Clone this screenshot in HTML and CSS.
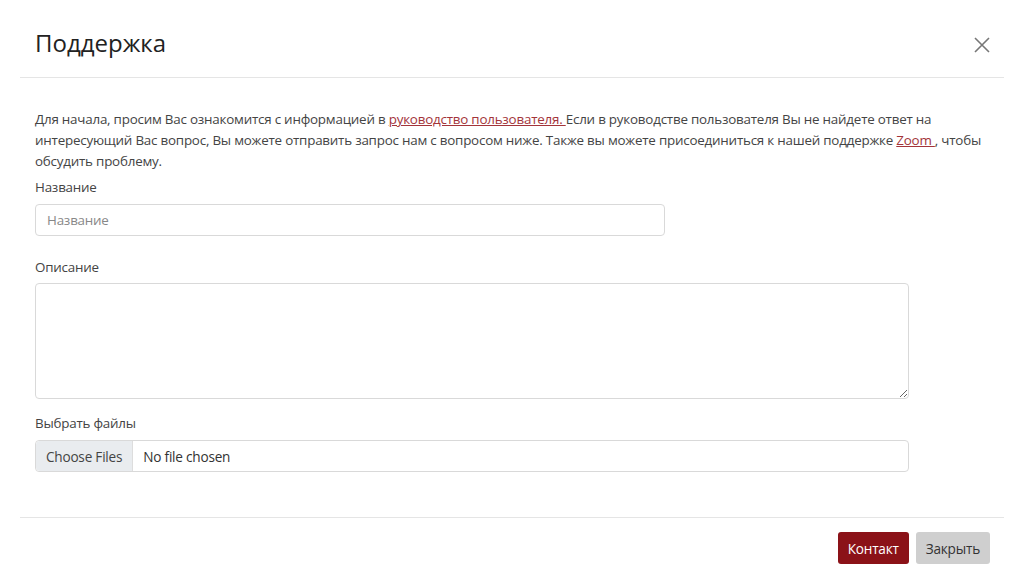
FILE: index.html
```html
<!DOCTYPE html>
<html lang="ru">
<head>
    <meta charset="UTF-8">
    <meta name="viewport" content="width=device-width, initial-scale=1.0">
    <title>Поддержка</title>
    <link rel="stylesheet" href="styles.css">
</head>
<body>
    <div class="modal">
        <!-- Header -->
        <div class="modal-header">
            <h4 class="modal-title">Поддержка</h4>
            <button class="close-btn" type="button" aria-label="Close">
                <svg width="16" height="16" viewBox="0 0 16 16">
                    <path d="M1 1 L15 15 M15 1 L1 15" stroke="#777" stroke-width="1.6" fill="none"/>
                </svg>
            </button>
        </div>

        <!-- Body -->
        <div class="modal-body">
            <p class="intro">Для начала, просим Вас ознакомится с информацией в <a href="#">руководство пользователя. </a>Если в руководстве пользователя Вы не найдете ответ на интересующий Вас вопрос, Вы можете отправить запрос нам с вопросом ниже. Также вы можете присоединиться к нашей поддержке <a href="#">Zoom </a>, чтобы обсудить проблему.</p>

            <div class="form-group first">
                <label for="title">Название</label>
                <input type="text" id="title" class="form-control short" placeholder="Название">
            </div>

            <div class="form-group">
                <label for="desc">Описание</label>
                <textarea id="desc" class="form-control area"></textarea>
            </div>

            <div class="form-group">
                <label for="files">Выбрать файлы</label>
                <input type="file" id="files" class="form-control file" multiple>
            </div>
        </div>

        <!-- Footer -->
        <div class="modal-footer">
            <button class="btn primary" type="button">Контакт</button>
            <button class="btn secondary" type="button">Закрыть</button>
        </div>
    </div>
</body>
</html>
```

FILE: styles.css
```css
body {
    margin: 0;
    padding: 0;
    background: #fff;
    font-family: "Open Sans", "Noto Sans", sans-serif;
    color: #333;
}

.modal {
    width: 984px;
    margin: 0 20px;
}

.modal-header {
    display: flex;
    justify-content: space-between;
    align-items: center;
    padding: 29px 14px 21px 15px;
    border-bottom: 1px solid #e5e5e5;
}

.modal-title {
    margin: 0;
    font-size: 24px;
    font-weight: 400;
    line-height: 27px;
    color: #222;
}

.close-btn {
    border: none;
    background: none;
    padding: 0;
    margin-top: 4px;
    width: 16px;
    height: 16px;
    cursor: pointer;
}

.modal-body {
    padding: 31px 15px 31px;
    letter-spacing: -0.22px;
}

.intro {
    margin: 0 0 5px;
    font-size: 13.4px;
    line-height: 21px;
    color: #444;
}

.intro a {
    color: #a3343a;
    text-decoration: underline;
}

.form-group {
    margin-bottom: 14px;
}

.form-group.first {
    margin-bottom: 21px;
}

.form-group label {
    display: block;
    font-size: 13.4px;
    line-height: 21px;
    color: #444;
    margin-bottom: 6px;
}

.form-control {
    box-sizing: border-box;
    display: block;
    width: 874px;
    height: 32px;
    padding: 6px 11px;
    border: 1px solid #d9d9d9;
    border-radius: 4px;
    background: #fff;
    font-family: inherit;
    font-size: 13.4px;
    letter-spacing: -0.22px;
    color: #444;
}

.form-control::placeholder {
    color: #888;
}

.form-control.short {
    width: 630px;
}

.form-control.area {
    height: 116px;
    margin-top: -1px;
    resize: vertical;
}

.form-control.file {
    padding: 0;
    font-size: 13.6px;
    line-height: 30px;
    color: #333;
}

.form-control.file::file-selector-button {
    height: 30px;
    margin: 0 10px 0 0;
    padding: 0 10px;
    border: none;
    border-right: 1px solid #ddd;
    border-radius: 4px 0 0 4px;
    background: #e9ecef;
    font-family: inherit;
    font-size: 13.6px;
    letter-spacing: -0.22px;
    color: #444;
}

.modal-footer {
    display: flex;
    justify-content: flex-end;
    gap: 7px;
    padding: 14px 14px 18px;
    border-top: 1px solid #e5e5e5;
}

.btn {
    height: 32px;
    padding: 0 10px;
    border: none;
    border-radius: 3px;
    font-family: inherit;
    font-size: 13.6px;
    letter-spacing: -0.2px;
    cursor: pointer;
}

.btn.primary {
    background: #8b1218;
    color: #fff;
}

.btn.secondary {
    background: #cfcfcf;
    color: #333;
}
```
